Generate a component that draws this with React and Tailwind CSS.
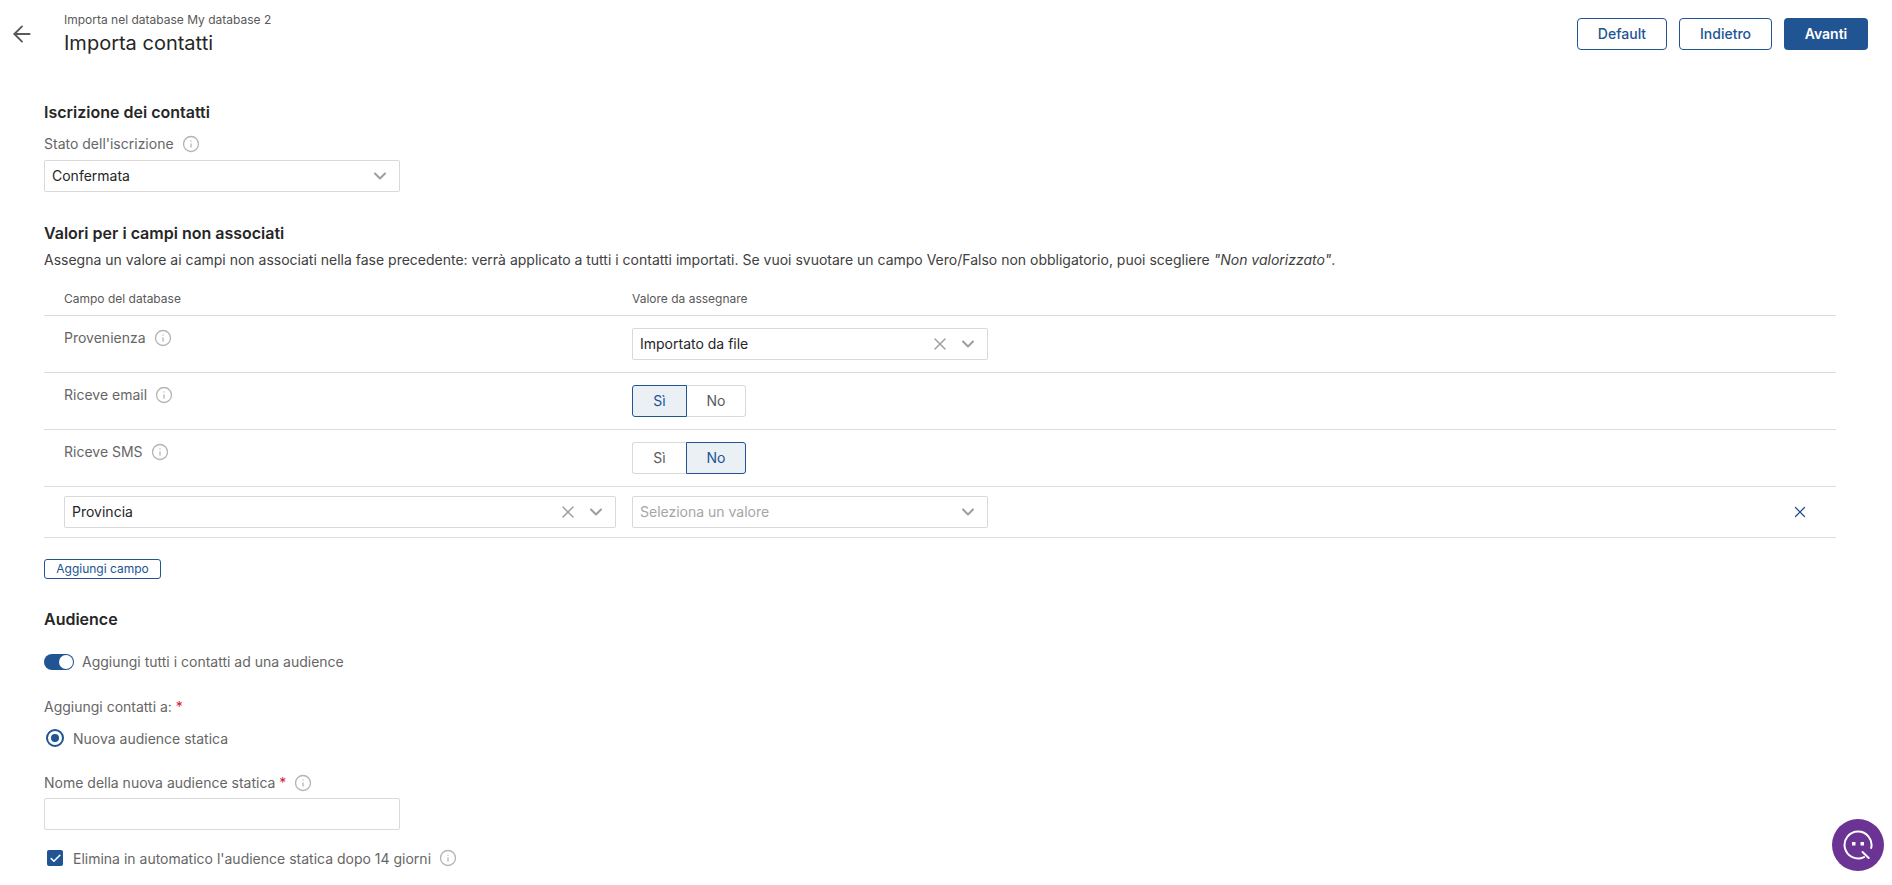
import { ArrowLeft, ChevronDown, X, Info, Check } from "lucide-react";

function InfoIcon() {
  return <Info size={18} strokeWidth={1.75} className="ml-2 text-[#b4b4b4] shrink-0" />;
}

function Select({ value, placeholder, clearable, className }) {
  return (
    <div className={`h-8 flex items-center justify-between border border-[#d9d9d9] rounded-[2px] bg-white pl-[7px] pr-[9px] text-sm ${className}`}>
      <span className={value ? "text-[#262626]" : "text-[#a6a6a6]"}>{value || placeholder}</span>
      <div className="flex items-center gap-2 text-[#a09c9c]">
        {clearable && <X size={20} strokeWidth={1.7} />}
        <ChevronDown size={20} strokeWidth={2.4} />
      </div>
    </div>
  );
}

function YesNo({ active }) {
  const on = "border border-[#205493] bg-[#ebf0f5] text-[#205493]";
  const off = "border border-[#d9d9d9] bg-white text-[#595959]";
  return (
    <div className="flex h-8 text-sm">
      <div className={`flex items-center justify-center rounded-l-[3px] ${active === "si" ? `w-[55px] ${on}` : `w-[54px] ${off} border-r-0`}`}>Sì</div>
      <div className={`flex items-center justify-center rounded-r-[3px] ${active === "no" ? `w-[60px] ${on}` : `w-[59px] ${off} border-l-0`}`}>No</div>
    </div>
  );
}

function Row({ label, children }) {
  return (
    <div className="h-[57px] flex border-b border-[#dcdcdc]">
      <div className="w-[568px] ml-5 pt-[13px] text-sm text-[#666666]">
        <div className="h-[17px] flex items-center">
          {label}
          <InfoIcon />
        </div>
      </div>
      <div className="pt-3">{children}</div>
    </div>
  );
}

export default function App() {
  return (
    <div className="relative h-[885px] overflow-hidden bg-white font-['Inter',sans-serif] text-sm text-[#666666]">
      {/* Header */}
      <div className="flex items-start justify-between pl-[9px] pr-6 pt-[12px]">
        <div className="flex">
          <ArrowLeft size={26} strokeWidth={1.75} className="mt-[9px] text-[#595959]" />
          <div className="ml-[29px]">
            <div className="text-xs leading-[15px] text-[#595959]">Importa nel database My database 2</div>
            <div className="text-xl leading-[24px] mt-[4px] text-[#262626]">Importa contatti</div>
          </div>
        </div>
        <div className="flex gap-3 pt-[6px]">
          <button className="w-[90px] h-8 rounded-[4px] border border-[#205493] text-sm font-medium text-[#205493]">Default</button>
          <button className="w-[93px] h-8 rounded-[4px] border border-[#205493] text-sm font-medium text-[#205493]">Indietro</button>
          <button className="w-[84px] h-8 rounded-[4px] bg-[#205493] text-sm font-semibold text-white">Avanti</button>
        </div>
      </div>

      <div className="pl-11 pr-14">
        {/* Iscrizione */}
        <h2 className="mt-[48px] text-base leading-[18px] font-semibold text-[#262626]">Iscrizione dei contatti</h2>
        <div className="mt-[14px] h-[17px] flex items-center">
          Stato dell'iscrizione
          <InfoIcon />
        </div>
        <Select value="Confermata" className="mt-[8px] w-[356px]" />

        {/* Valori */}
        <h2 className="mt-[32px] text-base leading-[18px] font-semibold text-[#262626]">Valori per i campi non associati</h2>
        <p className="mt-[9px] leading-[17px] text-[#404040]">
          Assegna un valore ai campi non associati nella fase precedente: verrà applicato a tutti i contatti importati. Se vuoi svuotare un campo Vero/Falso non obbligatorio, puoi scegliere <em>"Non valorizzato"</em>.
        </p>

        <div className="mt-[10px]">
          <div className="h-[38px] flex items-end pb-[8px] border-b border-[#dcdcdc] text-xs text-[#595959]">
            <div className="w-[568px] ml-5">Campo del database</div>
            <div>Valore da assegnare</div>
          </div>
          <Row label="Provenienza">
            <Select value="Importato da file" clearable className="w-[356px]" />
          </Row>
          <Row label="Riceve email">
            <YesNo active="si" />
          </Row>
          <Row label="Riceve SMS">
            <YesNo active="no" />
          </Row>
          <div className="h-[51px] flex items-center border-b border-[#dcdcdc] pl-5">
            <Select value="Provincia" clearable className="w-[552px]" />
            <Select placeholder="Seleziona un valore" className="w-[356px] ml-4" />
            <X size={18} strokeWidth={1.75} className="ml-auto mr-[27px] text-[#205493]" />
          </div>
        </div>

        <button className="mt-[21px] block w-[117px] h-5 rounded-[3px] border border-[#205493] text-xs leading-[16px] text-[#205493]">Aggiungi campo</button>

        {/* Audience */}
        <h2 className="mt-[31px] text-base leading-[18px] font-semibold text-[#262626]">Audience</h2>
        <div className="mt-[25px] flex items-center">
          <div className="relative w-[30px] h-4 rounded-full bg-[#205493]">
            <div className="absolute right-[1px] top-[1px] w-[14px] h-[14px] rounded-full bg-white" />
          </div>
          <span className="ml-2 leading-[17px]">Aggiungi tutti i contatti ad una audience</span>
        </div>
        <div className="mt-[28px] leading-[17px]">
          Aggiungi contatti a: <span className="text-[#d9143c]">*</span>
        </div>
        <div className="mt-[14px] flex items-center">
          <div className="ml-[2px] w-[18px] h-[18px] rounded-full border-2 border-[#205493] flex items-center justify-center">
            <div className="w-2 h-2 rounded-full bg-[#205493]" />
          </div>
          <span className="ml-[9px] leading-[17px]">Nuova audience statica</span>
        </div>
        <div className="mt-[27px] h-[17px] flex items-center">
          Nome della nuova audience statica&nbsp;<span className="text-[#d9143c]">*</span>
          <InfoIcon />
        </div>
        <div className="mt-[7px] w-[356px] h-8 border border-[#d9d9d9] rounded-[2px]" />
        <div className="mt-[19px] flex items-center">
          <div className="ml-[3px] w-4 h-4 rounded-[2px] bg-[#205493] flex items-center justify-center">
            <Check size={13} strokeWidth={3} className="text-white" />
          </div>
          <span className="ml-[10px] leading-[17px]">Elimina in automatico l'audience statica dopo 14 giorni</span>
          <InfoIcon />
        </div>
      </div>

      {/* Chat button */}
      <div className="absolute right-2 bottom-[14px] w-[52px] h-[52px] rounded-full bg-[#6b3394] flex items-center justify-center">
        <svg width="30" height="30" viewBox="0 0 30 30" fill="none">
          <path d="M21 27.1 A13.5 13.5 0 1 1 28.2 18" stroke="white" strokeWidth="2" strokeLinecap="round" />
          <path d="M19.5 22 L25.7 28" stroke="white" strokeWidth="2" strokeLinecap="round" />
          <rect x="9" y="12" width="3.5" height="3.5" fill="white" />
          <rect x="17.5" y="12" width="3.5" height="3.5" fill="white" />
        </svg>
      </div>
    </div>
  );
}
